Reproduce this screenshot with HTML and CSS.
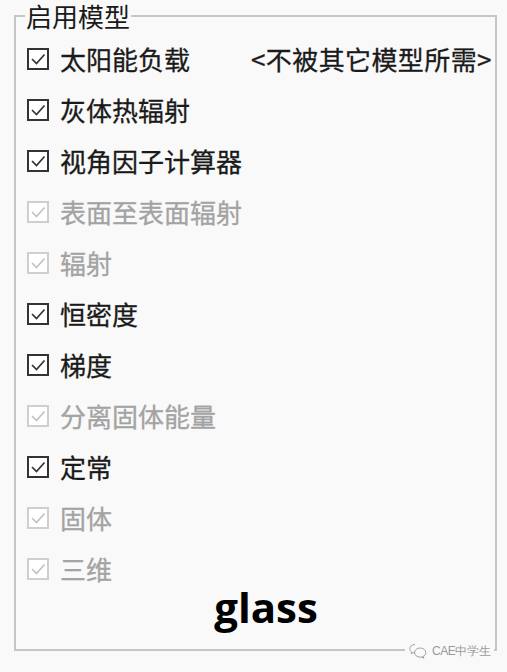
FILE: index.html
```html
<!DOCTYPE html>
<html lang="zh">
<head>
<meta charset="utf-8">
<link rel="stylesheet" href="styles.css">
</head>
<body>
<fieldset class="panel">
  <legend class="title">启用模型</legend>
  <div class="row"><span class="box"><svg viewBox="0 0 18 18"><path d="M3 9 L7.5 13.5 L15.5 4.5"/></svg></span><span class="label">太阳能负载</span><span class="note">&lt;不被其它模型所需&gt;</span></div>
  <div class="row"><span class="box"><svg viewBox="0 0 18 18"><path d="M3 9 L7.5 13.5 L15.5 4.5"/></svg></span><span class="label">灰体热辐射</span></div>
  <div class="row"><span class="box"><svg viewBox="0 0 18 18"><path d="M3 9 L7.5 13.5 L15.5 4.5"/></svg></span><span class="label">视角因子计算器</span></div>
  <div class="row off"><span class="box"><svg viewBox="0 0 18 18"><path d="M3 9 L7.5 13.5 L15.5 4.5"/></svg></span><span class="label">表面至表面辐射</span></div>
  <div class="row off"><span class="box"><svg viewBox="0 0 18 18"><path d="M3 9 L7.5 13.5 L15.5 4.5"/></svg></span><span class="label">辐射</span></div>
  <div class="row"><span class="box"><svg viewBox="0 0 18 18"><path d="M3 9 L7.5 13.5 L15.5 4.5"/></svg></span><span class="label">恒密度</span></div>
  <div class="row"><span class="box"><svg viewBox="0 0 18 18"><path d="M3 9 L7.5 13.5 L15.5 4.5"/></svg></span><span class="label">梯度</span></div>
  <div class="row off"><span class="box"><svg viewBox="0 0 18 18"><path d="M3 9 L7.5 13.5 L15.5 4.5"/></svg></span><span class="label">分离固体能量</span></div>
  <div class="row"><span class="box"><svg viewBox="0 0 18 18"><path d="M3 9 L7.5 13.5 L15.5 4.5"/></svg></span><span class="label">定常</span></div>
  <div class="row off"><span class="box"><svg viewBox="0 0 18 18"><path d="M3 9 L7.5 13.5 L15.5 4.5"/></svg></span><span class="label">固体</span></div>
  <div class="row off"><span class="box"><svg viewBox="0 0 18 18"><path d="M3 9 L7.5 13.5 L15.5 4.5"/></svg></span><span class="label">三维</span></div>
  <div class="glass">glass</div>
</fieldset>
<div class="watermark">
  <svg class="wx" viewBox="0 0 18 16"><path d="M6 1.5 C2.8 1.5 0.8 3.6 0.8 5.8 C0.8 7.1 1.5 8.2 2.6 9 L2.2 10.6 L4.1 9.7 C4.7 9.9 5.3 10 6 10"/><ellipse cx="11.2" cy="9.6" rx="5.6" ry="4.6"/><path d="M14.2 13.6 L15 15.2 L13 14.3"/></svg>
  <span>CAE中学生</span>
</div>
</body>
</html>
```
FILE: styles.css
```css
html, body {
  margin: 0;
  padding: 0;
  background: #f9f9f9;
}
body {
  width: 507px;
  height: 672px;
  position: relative;
  font-family: "Noto Sans CJK SC", "Noto Sans", sans-serif;
  color: #1a1a1a;
}
.panel {
  box-sizing: border-box;
  width: 483px;
  margin: 0 0 0 14px;
  padding: 1px 0 21px 11px;
  border: 2px solid #c6c6c6;
  min-inline-size: 0;
}
.title {
  font-size: 26px;
  line-height: 32px;
  padding: 0 1px;
  margin-left: -2px;
  color: #1a1a1a;
}
.row {
  display: flex;
  align-items: center;
  height: 51px;
}
.box {
  box-sizing: border-box;
  width: 22px;
  height: 22px;
  border: 2px solid #333;
  background: #fff;
  display: flex;
  flex: none;
}
.box svg {
  width: 18px;
  height: 18px;
  fill: none;
  stroke: #333;
  stroke-width: 1.7;
}
.label {
  font-size: 26px;
  margin-left: 11px;
  line-height: 30px;
  -webkit-text-stroke: 0.3px currentColor;
}
.note {
  font-size: 26px;
  line-height: 30px;
  margin-left: 61px;
  letter-spacing: 0.4px;
  color: #1a1a1a;
  -webkit-text-stroke: 0.3px currentColor;
}
.row.off .box {
  border-color: #cfcfcf;
}
.row.off .box svg {
  stroke: #c2c2c2;
}
.row.off .label {
  color: #a3a3a3;
}
.glass {
  font-family: "Open Sans", sans-serif;
  font-weight: 700;
  font-size: 42px;
  line-height: 42px;
  margin-top: -8px;
  padding-left: 10px;
  text-align: center;
  color: #000;
}
.watermark {
  position: absolute;
  left: 405px;
  top: 642px;
  display: flex;
  align-items: center;
  gap: 5px;
  padding: 0 4px;
  background: #f9f9f9;
  font-family: "Liberation Sans", sans-serif;
  font-size: 12px;
  line-height: 18px;
  letter-spacing: -0.4px;
  color: #9a9a9a;
}
.wx {
  width: 18px;
  height: 16px;
  fill: none;
  stroke: #a0a0a0;
  stroke-width: 1;
}
```
